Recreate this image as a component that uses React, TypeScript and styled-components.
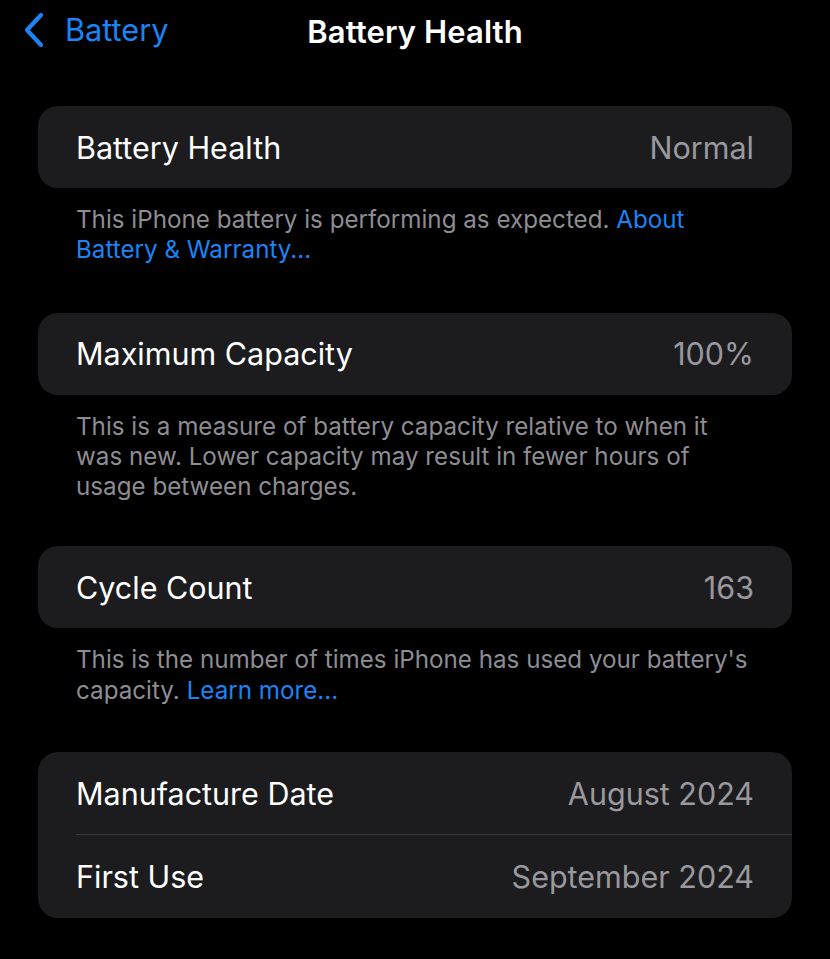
import React from "react";
import styled, { createGlobalStyle } from "styled-components";

const Global = createGlobalStyle`
  html, body { margin: 0; padding: 0; background: #000; }
  body { font-family: Inter, "Noto Sans", "Liberation Sans", sans-serif; -webkit-font-smoothing: antialiased; }
`;

const Page = styled.div`
  width: 830px;
  min-height: 959px;
  background: #000;
  color: #fff;
  box-sizing: border-box;
`;

const NavBar = styled.div`
  position: relative;
  height: 64px;
  display: flex;
  align-items: center;
  justify-content: center;
`;

const BackButton = styled.div`
  position: absolute;
  left: 22px;
  top: 11px;
  display: flex;
  align-items: center;
  gap: 19px;
  color: #1b84f5;
  font-size: 30.7px;
  letter-spacing: 0px;
`;

const Title = styled.div`
  font-size: 31px;
  font-weight: 600;
  letter-spacing: 0.1px;
  margin-top: -2px;
`;

const Content = styled.div`
  padding: 42px 38px 0 38px;
  display: flex;
  flex-direction: column;
`;

const Section = styled.div<{ $gap?: number }>`
  margin-bottom: ${(p) => p.$gap ?? 47}px;
`;

const Card = styled.div`
  background: #1c1c1e;
  border-radius: 20px;
  overflow: hidden;
`;

const Row = styled.div<{ $divider?: boolean; $tall?: boolean }>`
  height: ${(p) => (p.$tall ? 83 : 82)}px;
  display: flex;
  align-items: center;
  justify-content: space-between;
  padding: 0 38px;
  position: relative;
  font-size: 30.5px;
  letter-spacing: 0px;
  ${(p) =>
    p.$divider
      ? `&::after { content: ""; position: absolute; left: 38px; right: 0; bottom: 0; height: 1px; background: #38383a; }`
      : ""}
`;

const Label = styled.span`
  color: #fff;
`;

const Value = styled.span`
  color: #98989e;
`;

const Footer = styled.div`
  padding: 17px 38px 0 38px;
  font-size: 24.2px;
  line-height: 30.3px;
  color: #8d8d93;
  letter-spacing: 0px;
`;

const Link = styled.span`
  color: #1b84f5;
`;

const Chevron = () => (
  <svg width="24" height="36" viewBox="0 0 24 36">
    <path d="M19 3 L5 18 L19 33" fill="none" stroke="#1b84f5" strokeWidth="4.2" strokeLinecap="round" strokeLinejoin="round" />
  </svg>
);

export default function App() {
  return (
    <Page>
      <Global />
      <NavBar>
        <BackButton>
          <Chevron />
          <span>Battery</span>
        </BackButton>
        <Title>Battery Health</Title>
      </NavBar>
      <Content>
        <Section $gap={47}>
          <Card>
            <Row>
              <Label>Battery Health</Label>
              <Value>Normal</Value>
            </Row>
          </Card>
          <Footer>
            This iPhone battery is performing as expected. <Link>About Battery &amp; Warranty...</Link>
          </Footer>
        </Section>
        <Section $gap={44}>
          <Card>
            <Row>
              <Label>Maximum Capacity</Label>
              <Value>100%</Value>
            </Row>
          </Card>
          <Footer>
            This is a measure of battery capacity relative to when it was new. Lower capacity may result in fewer hours of usage between charges.
          </Footer>
        </Section>
        <Section $gap={46}>
          <Card>
            <Row>
              <Label>Cycle Count</Label>
              <Value>163</Value>
            </Row>
          </Card>
          <Footer>
            This is the number of times iPhone has used your battery's capacity. <Link>Learn more...</Link>
          </Footer>
        </Section>
        <Section>
          <Card>
            <Row $divider $tall>
              <Label>Manufacture Date</Label>
              <Value>August 2024</Value>
            </Row>
            <Row $tall>
              <Label>First Use</Label>
              <Value>September 2024</Value>
            </Row>
          </Card>
        </Section>
      </Content>
    </Page>
  );
}
